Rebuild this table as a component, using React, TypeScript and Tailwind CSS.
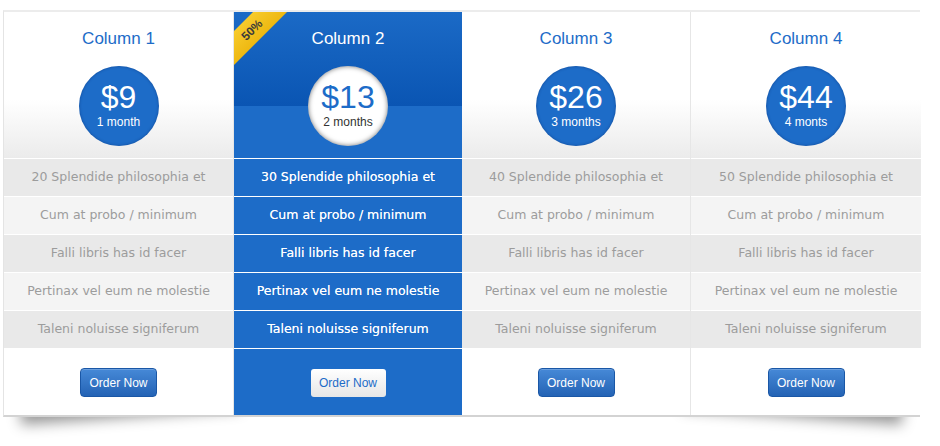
import React from 'react';

type Plan = {
  title: string;
  price: string;
  period: string;
  first: string;
  featured?: boolean;
};

const plans: Plan[] = [
  { title: 'Column 1', price: '$9', period: '1 month', first: '20 Splendide philosophia et' },
  { title: 'Column 2', price: '$13', period: '2 months', first: '30 Splendide philosophia et', featured: true },
  { title: 'Column 3', price: '$26', period: '3 months', first: '40 Splendide philosophia et' },
  { title: 'Column 4', price: '$44', period: '4 monts', first: '50 Splendide philosophia et' },
];

const features = [
  'Cum at probo / minimum',
  'Falli libris has id facer',
  'Pertinax vel eum ne molestie',
  'Taleni noluisse signiferum',
];

function Column({ plan, last }: { plan: Plan; last: boolean }) {
  const hot = !!plan.featured;
  const rows = [plan.first, ...features];

  return (
    <div className={`relative flex flex-col overflow-hidden ${hot ? 'bg-[#1d6cc8]' : 'bg-white'} ${!hot && !last ? 'border-r border-[#e6e6e6]' : ''}`}>
      {hot && (
        <div className="absolute left-[-28px] top-[6px] w-[92px] h-[24px] -rotate-45 bg-[linear-gradient(to_bottom,#f7cb2c,#eeb811)] flex items-center justify-center text-[12px] font-bold text-[#3a3a3a] z-10">
          50%
        </div>
      )}

      {/* header */}
      <div
        className={`h-[146px] flex flex-col items-center pt-[17px] ${
          hot
            ? 'bg-[linear-gradient(to_bottom,#1b6ac6_0px,#0a55b3_94px,#1d6cc8_94px,#1d6cc8_100%)]'
            : 'bg-[linear-gradient(to_bottom,#ffffff_60%,#ebebeb)]'
        }`}
      >
        <h2 className={`text-[17px] leading-[20px] ${hot ? 'text-white' : 'text-[#1d6cc8]'}`}>{plan.title}</h2>
        <div
          className={`mt-[17px] w-[80px] h-[80px] rounded-full flex flex-col items-center pt-[14px] ${
            hot
              ? 'bg-white shadow-[inset_0_0_5px_rgba(0,0,0,0.55)]'
              : 'bg-[#1d6cc8] shadow-[inset_0_0_3px_rgba(0,30,90,0.45)]'
          }`}
        >
          <span className={`text-[32px] leading-[34px] ${hot ? 'text-[#1d6cc8]' : 'text-white'}`}>{plan.price}</span>
          <span className={`text-[12px] leading-[14px] mt-[1px] ${hot ? 'text-[#333]' : 'text-white'}`}>{plan.period}</span>
        </div>
      </div>

      {/* features */}
      {rows.map((r, i) => (
        <div
          key={i}
          className={`h-[38px] border-t border-white flex items-center justify-center font-['DejaVu_Sans',sans-serif] text-[12.5px] ${
            hot
              ? 'bg-[#1d6cc8] text-white [text-shadow:0_0_0.6px_rgba(255,255,255,0.8)]'
              : i % 2 === 0
              ? 'bg-[#e9e9e9] text-[#9c9c9c]'
              : 'bg-[#f4f4f4] text-[#9c9c9c]'
          }`}
        >
          {r}
        </div>
      ))}

      {/* footer */}
      <div className={`h-[67px] border-t border-white flex items-center justify-center pt-[1px] ${hot ? 'bg-[#1d6cc8]' : 'bg-white'}`}>
        {hot ? (
          <button className="w-[75px] h-[28px] rounded-[3px] bg-[linear-gradient(to_bottom,#ffffff,#e6e6e6)] text-[12px] text-[#1d6cc8]">
            Order Now
          </button>
        ) : (
          <button className="w-[77px] h-[29px] rounded-[4px] border border-[#1a57a6] bg-[linear-gradient(to_bottom,#4689d7,#2463b5)] text-[12px] text-white shadow-[inset_0_1px_0_rgba(255,255,255,0.2)]">
            Order Now
          </button>
        )}
      </div>
    </div>
  );
}

export default function App() {
  return (
    <div className="w-[940px] h-[446px] bg-white pt-[10px] pl-[3px] font-['Liberation_Sans',Arial,sans-serif]">
      <div className="relative isolate w-[917px]">
        {/* curled-corner shadows */}
        <div className="absolute -z-10 left-[16px] bottom-[18px] w-[220px] h-[20px] -rotate-[4deg] shadow-[0_18px_14px_rgba(0,0,0,0.42)]" />
        <div className="absolute -z-10 right-[16px] bottom-[18px] w-[220px] h-[20px] rotate-[4deg] shadow-[0_18px_14px_rgba(0,0,0,0.42)]" />
        <div className="grid grid-cols-[230px_228px_229px_230px] border-t-2 border-t-[#ececec] border-b-2 border-b-[#d3d3d3] border-l border-l-[#e4e4e4] bg-white">
          {plans.map((p, i) => (
            <Column key={p.title} plan={p} last={i === plans.length - 1} />
          ))}
        </div>
      </div>
    </div>
  );
}
